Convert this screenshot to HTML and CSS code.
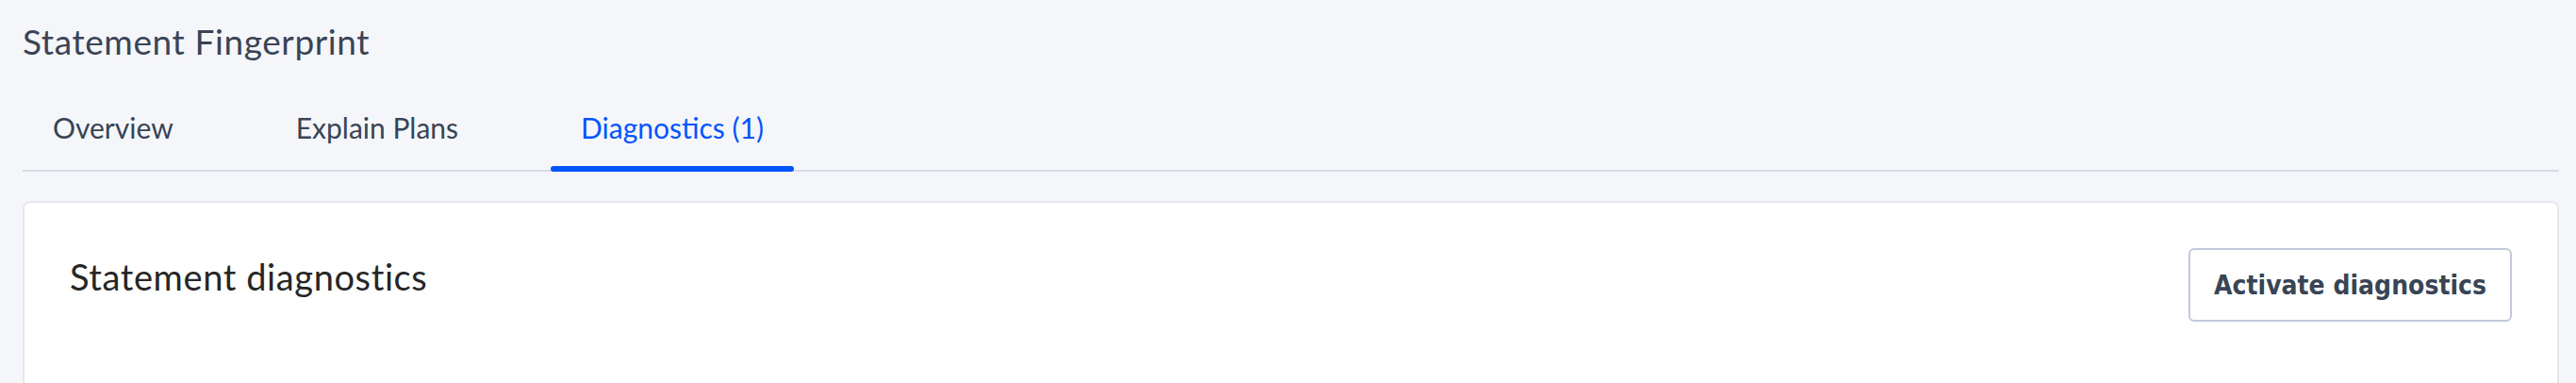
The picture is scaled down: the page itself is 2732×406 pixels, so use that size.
FILE: index.html
```html
<!DOCTYPE html>
<html>
<head>
<meta charset="utf-8">
<link rel="stylesheet" href="styles.css">
</head>
<body>
<div class="page">
  <h1 class="page-title">Statement Fingerprint</h1>
  <nav class="tabs">
    <div class="tab">Overview</div>
    <div class="tab">Explain Plans</div>
    <div class="tab tab-active">Diagnostics (1)</div>
  </nav>
  <section class="card">
    <div class="card-header">
      <h2 class="card-title">Statement diagnostics</h2>
      <button class="btn">Activate diagnostics</button>
    </div>
  </section>
</div>
</body>
</html>
```

FILE: styles.css
```css
html, body {
  margin: 0;
  padding: 0;
  background: #f5f6fa;
}
.page {
  padding: 0 18px 0 24px;
  font-family: "Lato", "Noto Sans", sans-serif;
}
.page-title {
  margin: 0;
  padding-top: 20px;
  font-size: 37px;
  line-height: 48px;
  letter-spacing: 0.6px;
  font-weight: 400;
  color: #3a4455;
}
.tabs {
  display: flex;
  gap: 66px;
  margin-top: 21px;
  border-bottom: 2px solid #d6dbe5;
}
.tab {
  position: relative;
  padding: 24px 32px 23px;
  font-size: 30px;
  line-height: 44px;
  color: #394455;
}
.tab-active {
  color: #0055ff;
}
.tab-active::after {
  content: "";
  position: absolute;
  left: 0;
  right: 0;
  bottom: -2px;
  height: 6px;
  border-radius: 3px;
  background: #0055ff;
}
.card {
  margin-top: 31px;
  height: 300px;
  background: #ffffff;
  border: 2px solid #e6e8ef;
  border-radius: 8px;
  padding: 48px;
}
.card-header {
  display: flex;
  justify-content: space-between;
  align-items: flex-start;
}
.card-title {
  margin: 0;
  font-size: 38px;
  line-height: 60px;
  letter-spacing: 0.6px;
  font-weight: 400;
  color: #262626;
}
.btn {
  height: 78px;
  padding: 0 25px;
  background: #ffffff;
  border: 2px solid #c2c9da;
  border-radius: 6px;
  font-family: "DejaVu Sans Condensed", "DejaVu Sans", sans-serif;
  font-stretch: semi-condensed;
  font-weight: 700;
  font-size: 28px;
  color: #394455;
}
```
